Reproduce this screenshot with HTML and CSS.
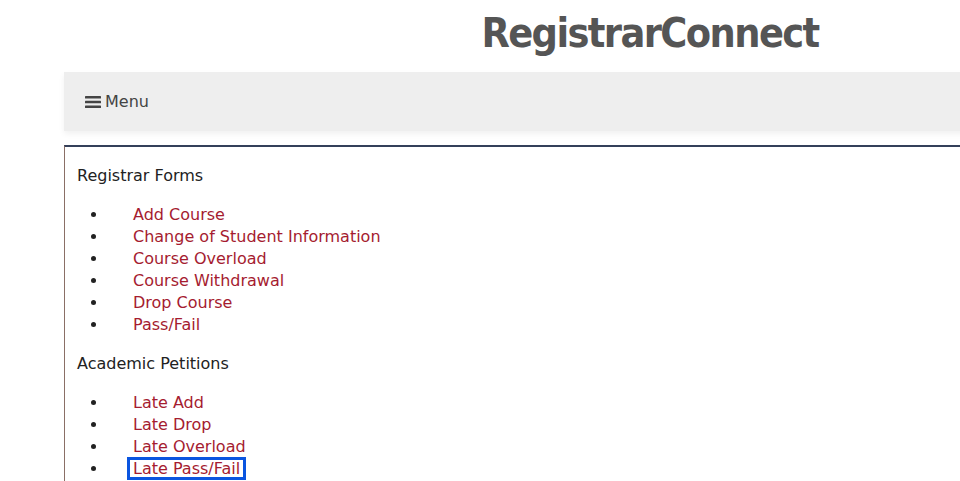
FILE: index.html
```html
<!DOCTYPE html>
<html lang="en">
<head>
<meta charset="utf-8">
<title>RegistrarConnect</title>
<link rel="stylesheet" href="styles.css">
</head>
<body>
<div class="page">
  <header class="masthead">
    <h1 class="title">RegistrarConnect</h1>
  </header>
  <nav class="navbar">
    <button class="menu-btn" type="button">
      <svg class="bars" width="16" height="14" viewBox="0 0 16 14" aria-hidden="true">
        <rect x="0" y="1" width="16" height="2.6" rx="0.6"/>
        <rect x="0" y="5.7" width="16" height="2.6" rx="0.6"/>
        <rect x="0" y="10.4" width="16" height="2.6" rx="0.6"/>
      </svg>
      <span>Menu</span>
    </button>
  </nav>
  <main class="panel">
    <p class="section-title">Registrar Forms</p>
    <ul class="links">
      <li><a href="#">Add Course</a></li>
      <li><a href="#">Change of Student Information</a></li>
      <li><a href="#">Course Overload</a></li>
      <li><a href="#">Course Withdrawal</a></li>
      <li><a href="#">Drop Course</a></li>
      <li><a href="#">Pass/Fail</a></li>
    </ul>
    <p class="section-title">Academic Petitions</p>
    <ul class="links">
      <li><a href="#">Late Add</a></li>
      <li><a href="#">Late Drop</a></li>
      <li><a href="#">Late Overload</a></li>
      <li><a href="#" class="focused">Late Pass/Fail</a></li>
    </ul>
  </main>
</div>
</body>
</html>
```
FILE: styles.css
```css
html, body {
  margin: 0;
  padding: 0;
  background: #fff;
}
body {
  font-family: "DejaVu Sans", sans-serif;
  color: #222;
  overflow: hidden;
}
.page {
  margin-left: 64px;
  width: 1172px;
}
.masthead {
  height: 72px;
  display: flex;
  align-items: center;
  justify-content: center;
}
.title {
  margin: 0;
  font-family: "DejaVu Sans Condensed", "DejaVu Sans", sans-serif;
  font-size: 41px;
  font-weight: bold;
  color: #555;
  letter-spacing: -1.6px;
  position: relative;
  top: -3px;
  left: 0;
}
.navbar {
  height: 59px;
  background: #eee;
  display: flex;
  align-items: center;
  box-shadow: 0 3px 6px rgba(0,0,0,0.06);
}
.menu-btn {
  border: 0;
  background: transparent;
  display: flex;
  align-items: center;
  gap: 4px;
  padding: 0 0 0 21px;
  font-family: inherit;
  font-size: 16px;
  color: #444;
}
.bars {
  fill: #444;
}
.panel {
  margin-top: 14px;
  border-top: 2px solid #34405a;
  border-left: 1px solid #8a6f66;
  padding: 1px 12px 20px;
  font-size: 16px;
  line-height: 22px;
}
.section-title {
  margin: 17px 0;
}
.links {
  margin: 17px 0;
  padding-left: 31px;
}
.links li {
  padding-left: 25px;
}
.links a {
  color: #a51c30;
  text-decoration: none;
}
.links a.focused {
  display: inline-block;
  line-height: 17px;
  padding: 0 3px;
  margin: 0 -3px;
  outline: 3px solid #0a55e0;
  outline-offset: 0;
}
```
